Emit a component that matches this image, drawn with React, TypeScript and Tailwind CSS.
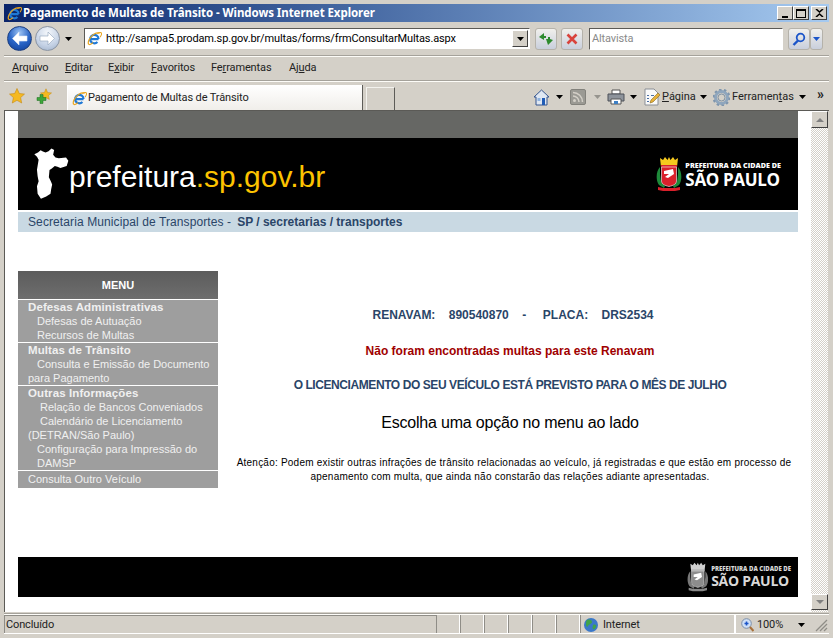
import type { ReactNode } from "react";

const IeLogo = ({ size = 16 }: { size?: number }) => (
  <svg width={size} height={size} viewBox="0 0 16 16" className="shrink-0">
    <path d="M4 8.600h8.300M12.300 8.600a4.500 4.500 0 1 0-1.200 3.100" fill="none" stroke="#1f79d6" strokeWidth="2.300" />
    <path d="M13.500 2.200c-3.500-1.300-9 2-11.300 7.200-1 2.300-1.100 4.200-.2 4.800 1 .6 2.700-.2 4.400-1.800" fill="none" stroke="#e9a520" strokeWidth="1.300" />
    <path d="M11 2.600c2.400-1.100 4.100-1.200 4.500-.2.300.8-.3 2.400-1.500 4.100" fill="none" stroke="#e9a520" strokeWidth="1.100" />
  </svg>
);

const Caret = ({ color = "#000" }: { color?: string }) => (
  <svg width="7" height="4" viewBox="0 0 7 4" className="shrink-0">
    <path d="M0 0h7L3.500 4z" fill={color} />
  </svg>
);

const NavArrow = ({ dir, active }: { dir: "l" | "r"; active: boolean }) => (
  <div
    className={`w-[25px] h-[25px] rounded-full flex items-center justify-center border shrink-0 ${
      active
        ? "bg-[radial-gradient(circle_at_50%_25%,#9fc4f2,#2a66c8_50%,#0e3d96)] border-[#1d3f80]"
        : "bg-[radial-gradient(circle_at_50%_25%,#f4f7fb,#c6d3e6_60%,#9eb0c8)] border-[#8a94a3]"
    }`}
  >
    <svg width="17" height="15" viewBox="0 0 17 15">
      <path
        d={dir === "l" ? "M8 1L1.500 7.500 8 14v-4h8V5H8z" : "M9 1l6.500 6.500L9 14v-4H1V5h8z"}
        fill="#fff"
        stroke={active ? "#dbe7fa" : "#8ea1bb"}
        strokeWidth="0.6"
      />
    </svg>
  </div>
);

const SquareBtn = ({ children, w = 22 }: { children: ReactNode; w?: number }) => (
  <div
    style={{ width: w }}
    className="h-[22px] rounded-[3px] border border-[#b5b2aa] bg-gradient-to-b from-[#f1f0ec] to-[#c9cfdc] flex items-center justify-center shrink-0"
  >
    {children}
  </div>
);

const WinBtn = ({ children }: { children: ReactNode }) => (
  <div className="w-[16px] h-[14px] bg-[#d4d0c8] border border-t-white border-l-white border-r-[#404040] border-b-[#404040] flex items-center justify-center shrink-0">
    {children}
  </div>
);

const Groove = () => <div className="h-[2px] shrink-0 bg-[#fdfcf8] border-t border-[#a5a29b]" />;

const MenuLabel = ({ pre, u, post }: { pre?: string; u: string; post: string }) => (
  <span>
    {pre}
    <span className="underline">{u}</span>
    {post}
  </span>
);

const SpMap = () => (
  <svg width="35" height="52" viewBox="15 12 106 156" className="shrink-0">
    <path
      d="M16 30L27 25L35 18L42 22L50 25L59 21L68 13L76 17L73 32L80 40L90 42L112 40L119 50L114 66L95 72L86 68L78 66L69 73L62 78L60 100L66 112L70 122L67 136L65 150L52 158L36 165L26 150L24 127L29 112L26 97L24 77L29 47L24 38Z"
      fill="#fff"
    />
  </svg>
);

const Crest = ({ mono, h }: { mono?: boolean; h: number }) => (
  <svg width={(h * 26) / 36} height={h} viewBox="0 0 26 36" className="shrink-0">
    <path d="M4 2l3 2 2-3 2.500 3L13 1l1.500 3L17 1l2 3 3-2-1 9H5z" fill={mono ? "#cfcfcf" : "#f6c91e"} />
    <path d="M5 9h16v2H5z" fill={mono ? "#aaa" : "#d9202b"} />
    <path d="M4 11C0 15-.5 24 3 29l5 3 1-2-4-4-1-8zM22 11c4 4 4.500 13 1 18l-5 3-1-2 4-4 1-8z" fill={mono ? "#777" : "#1e8a3a"} />
    <path d="M5.500 11h15v14c0 3-3 4.500-7.500 5.500-4.500-1-7.500-2.500-7.500-5.500z" fill={mono ? "#8c8c8c" : "#d9202b"} stroke="#fff" strokeWidth="0.6" />
    <path d="M8 15l9-2 1 5-6 4-3-1 4-3-5 0z" fill="#fff" />
    <path d="M2 31l5 1h12l5-1v3l-5 1H7l-5-1z" fill={mono ? "#888" : "#d9202b"} />
  </svg>
);

const CityLogo = ({ mono, small }: { mono?: boolean; small?: boolean }) => (
  <div className={`flex items-center gap-[3px] font-['Open_Sans',sans-serif] ${mono ? "text-[#d8d8d8]" : "text-white"}`}>
    <Crest mono={mono} h={small ? 30 : 36} />
    <div className="flex flex-col items-start">
      <span className={`font-extrabold whitespace-nowrap ${small ? "text-[6px] leading-[7px]" : "text-[7.200px] leading-[8px]"}`}>
        PREFEITURA DA CIDADE DE
      </span>
      <span className={`font-bold tracking-[-0.02em] whitespace-nowrap ${small ? "mt-[1px] text-[14px] leading-[14px]" : "mt-[2px] text-[17px] leading-[17px]"}`}>
        SÃO PAULO
      </span>
    </div>
  </div>
);

const SideItem = ({ children, indent = "" }: { children: ReactNode; indent?: string }) => (
  <div className={`leading-[14px] whitespace-nowrap ${indent}`}>{children}</div>
);

const SideHead = ({ children }: { children: ReactNode }) => (
  <div className="leading-[14px] text-[11.500px] font-bold tracking-[0.1px] whitespace-nowrap">{children}</div>
);

const StatusCell = () => <div className="w-[24px] h-full border-l border-[#8f8d87] border-r border-r-white shrink-0" />;

export default function App() {
  return (
    <div className="w-[833px] h-[638px] overflow-hidden bg-[#d4d0c8] flex flex-col pt-[4px] px-[4px] font-['Roboto',sans-serif] text-[11px] tracking-[-0.13px] text-black">
      {/* title bar */}
      <div className="h-[18px] shrink-0 bg-gradient-to-r from-[#0a246a] to-[#a6caf0] flex items-center pl-[3px] pr-[2px]">
        <IeLogo size={15} />
        <span className="ml-[1px] text-white font-['Noto_Sans',sans-serif] font-bold text-[11.500px] tracking-[-0.07px] whitespace-nowrap">
          Pagamento de Multas de Trânsito - Windows Internet Explorer
        </span>
        <div className="ml-auto flex">
          <WinBtn>
            <div className="w-[6px] h-[2px] bg-black mt-[7px]" />
          </WinBtn>
          <WinBtn>
            <div className="w-[10px] h-[9px] border border-black border-t-2" />
          </WinBtn>
          <div className="ml-[2px]">
            <WinBtn>
              <svg width="9" height="8" viewBox="0 0 9 8">
                <path d="M1 0l3.500 3L8 0M1 8l3.500-3L8 8" stroke="#000" strokeWidth="1.600" fill="none" />
              </svg>
            </WinBtn>
          </div>
        </div>
      </div>

      {/* nav bar */}
      <div className="h-[33px] shrink-0 flex items-center pl-[3px]">
        <NavArrow dir="l" active />
        <div className="ml-[3px]">
          <NavArrow dir="r" active={false} />
        </div>
        <div className="ml-[5px]">
          <Caret />
        </div>
        <div className="ml-[12px] w-[446px] h-[21px] bg-white border border-[#5b5a56] border-r-white border-b-white flex items-center shrink-0">
          <div className="ml-[2px]">
            <IeLogo size={15} />
          </div>
          <span className="ml-[4px] mt-[1px] whitespace-nowrap">
            http://sampa5.prodam.sp.gov.br/multas/forms/frmConsultarMultas.aspx
          </span>
          <div className="ml-auto mr-[1px] w-[16px] h-[17px] bg-[#d4d0c8] border border-[#404040] border-t-white border-l-white flex items-center justify-center">
            <Caret />
          </div>
        </div>
        <div className="ml-[5px]">
          <SquareBtn>
            <svg width="16" height="14" viewBox="0 0 16 14">
              <path d="M6 1L1 5l5 3V6h2V4H6z" fill="#2e8b2e" />
              <path d="M10 13l5-5-3-1V5h-2v2H8z" fill="#2e8b2e" />
            </svg>
          </SquareBtn>
        </div>
        <div className="ml-[4px]">
          <SquareBtn>
            <svg width="12" height="12" viewBox="0 0 12 12">
              <path d="M1.500 1.500l9 9M10.500 1.500l-9 9" stroke="#d9433c" strokeWidth="2.600" />
            </svg>
          </SquareBtn>
        </div>
        <div className="ml-[6px] w-[194px] h-[22px] bg-white border border-[#5b5a56] border-r-white border-b-white flex items-center pl-[2px] pt-[2px] text-[#8a8a8a] shrink-0">
          Altavista
        </div>
        <div className="ml-[5px] flex">
          <SquareBtn>
            <svg width="14" height="14" viewBox="0 0 14 14">
              <circle cx="8.500" cy="5.500" r="3.800" fill="none" stroke="#1b55c9" strokeWidth="1.800" />
              <path d="M6 8.500L1.500 13" stroke="#1b55c9" strokeWidth="2.400" />
            </svg>
          </SquareBtn>
          <SquareBtn w={13}>
            <Caret color="#1b55c9" />
          </SquareBtn>
        </div>
      </div>
      <Groove />

      {/* menu bar */}
      <div className="h-[23px] shrink-0 flex items-center pl-[8px] text-[#222]">
        <div className="w-[53px]"><MenuLabel u="A" post="rquivo" /></div>
        <div className="w-[43px]"><MenuLabel u="E" post="ditar" /></div>
        <div className="w-[43px]"><MenuLabel pre="E" u="x" post="ibir" /></div>
        <div className="w-[60px]"><MenuLabel u="F" post="avoritos" /></div>
        <div className="w-[78px]"><MenuLabel pre="Fe" u="r" post="ramentas" /></div>
        <div><MenuLabel pre="Aj" u="u" post="da" /></div>
      </div>
      <Groove />

      {/* tab row */}
      <div className="h-[28px] shrink-0 flex items-end pl-[5px] text-[#222]">
        <div className="h-full flex items-center">
          <svg width="16" height="16" viewBox="0 0 16 16">
            <path d="M8 .5l2.300 5 5.200.6-3.900 3.500 1.100 5.400L8 12.300l-4.700 2.700 1.100-5.400L.5 6.100l5.200-.6z" fill="#f5b921" stroke="#c48a12" strokeWidth="0.600" />
          </svg>
          <svg width="16" height="16" viewBox="0 0 16 16" className="ml-[11px]">
            <path d="M10 .8l1.600 3.700 3.900.4-3 2.600.8 3.900L10 9.500l-3.300 1.900.8-3.900-3-2.600 3.900-.4z" fill="#f5b921" stroke="#c48a12" strokeWidth="0.500" />
            <path d="M4 6.500h3v3h3v3H7v3H4v-3H1v-3h3z" fill="#3da63a" stroke="#1d6d1d" strokeWidth="0.500" />
          </svg>
        </div>
        <div className="ml-[15px] w-[296px] h-[25px] bg-gradient-to-b from-white to-[#f0eeea] border-r border-[#5d5c58] border-l border-l-white flex items-center pl-[4px] pt-[1px] shrink-0">
          <IeLogo size={15} />
          <span className="ml-[1px] whitespace-nowrap">Pagamento de Multas de Trânsito</span>
        </div>
        <div className="ml-[3px] w-[29px] h-[23px] border border-b-0 border-[#f3f2ee] border-r-[#5d5c58] shrink-0" />
        <div className="h-full flex items-center ml-[138px] pt-[2px]">
          <svg width="17" height="17" viewBox="0 0 17 17" className="shrink-0">
            <path d="M8.500 1L1 8h2v8h11V8h2z" fill="#dfe7f2" stroke="#34558f" />
            <path d="M9 9h3v7H9z" fill="#1f5bb5" />
            <path d="M4.500 9h3v3h-3z" fill="#8fb3e0" />
          </svg>
          <div className="ml-[6px]"><Caret /></div>
          <div className="ml-[7px] w-[16px] h-[16px] rounded-[2px] bg-[#9b9a94] border border-[#83827c] flex items-center justify-center">
            <svg width="12" height="12" viewBox="0 0 12 12">
              <circle cx="2.500" cy="9.500" r="1.500" fill="#d4d0c8" />
              <path d="M1 5a6 6 0 0 1 6 6M1 1.500a9.500 9.500 0 0 1 9.500 9.500" fill="none" stroke="#d4d0c8" strokeWidth="1.500" />
            </svg>
          </div>
          <div className="ml-[8px]"><Caret color="#96948e" /></div>
          <svg width="18" height="16" viewBox="0 0 18 16" className="ml-[6px] shrink-0">
            <path d="M5 1h8v4H5z" fill="#fff" stroke="#555" />
            <path d="M1 5h16v7H1z" fill="#8d939b" stroke="#4c5159" />
            <path d="M4 10h10v5H4z" fill="#fff" stroke="#555" />
            <path d="M7 12h4v3H7z" fill="#3d7fc4" />
          </svg>
          <div className="ml-[5px]"><Caret /></div>
          <svg width="18" height="18" viewBox="0 0 18 18" className="ml-[6px] shrink-0">
            <path d="M2 1h9l4 4v12H2z" fill="#fafafa" stroke="#8a8f96" />
            <path d="M4 7h2v1H4zM4 10h2v1H4zM4 13h2v1H4zM8 7h3v1H8z" fill="#4a6fa5" />
            <path d="M7 15l1-3 7-7 2 2-7 7z" fill="#e7b23a" stroke="#8a6a1d" strokeWidth="0.600" />
          </svg>
          <span className="ml-[1px] w-[32px] shrink-0 tracking-normal"><span className="underline">P</span>ágina</span>
          <div className="ml-[6px]"><Caret /></div>
          <svg width="17" height="17" viewBox="0 0 17 17" className="ml-[6px] shrink-0">
            <circle cx="8.500" cy="8.500" r="6" fill="none" stroke="#8fa6bd" strokeWidth="3" />
            <circle cx="8.500" cy="8.500" r="8" fill="none" stroke="#7e95ad" strokeWidth="2" strokeDasharray="2.500 2.500" />
            <circle cx="8.500" cy="8.500" r="3.500" fill="#d4d0c8" stroke="#5d7793" strokeWidth="0.700" />
          </svg>
          <span className="ml-[2px] w-[61px] shrink-0 whitespace-nowrap tracking-normal">Ferramen<span className="underline">t</span>as</span>
          <div className="ml-[6px]"><Caret /></div>
          <span className="ml-[11px] mb-[6px] text-[14px] font-bold leading-none">»</span>
        </div>
      </div>

      {/* browser frame */}
      <div className="h-[502px] shrink-0 flex border-t border-l border-[#5b5a56] overflow-hidden tracking-normal">
        <div className="w-[806px] bg-white px-[13px] shrink-0">
          <div className="h-[27px] bg-[#666764]" />
          <div className="h-[72px] bg-black flex items-center justify-between pl-[16px] pr-[17px]">
            <div className="flex items-start">
              <SpMap />
              <div className="mt-[11px] font-['Liberation_Sans',sans-serif] text-[30px] leading-[36px] text-white whitespace-nowrap">
                prefeitura<span className="text-[#fdc300]">.sp.gov.br</span>
              </div>
            </div>
            <CityLogo />
          </div>
          <div className="mt-[2px] h-[20px] bg-[#c9d9e3] flex items-center pl-[10px] font-['Liberation_Sans',sans-serif] text-[12px] tracking-[0.1px] text-[#2a4568] whitespace-nowrap">
            Secretaria Municipal de Transportes -
            <b className="ml-[6px] tracking-normal">SP / secretarias / transportes</b>
          </div>

          <div className="mt-[39px] flex font-['Liberation_Sans',sans-serif]">
            <div className="w-[200px] shrink-0 text-[11px] text-[#f0f0f0]">
              <div className="h-[28px] bg-gradient-to-b from-[#5c5c5c] to-[#6e6e6e] flex items-center justify-center font-bold text-white">
                MENU
              </div>
              <div className="mt-[1px] bg-[#9e9e9e] h-[42px] pl-[10px]">
                <SideHead>Defesas Administrativas</SideHead>
                <SideItem indent="pl-[9px]">Defesas de Autuação</SideItem>
                <SideItem indent="pl-[9px]">Recursos de Multas</SideItem>
              </div>
              <div className="mt-[1px] bg-[#9e9e9e] h-[42px] pl-[10px]">
                <SideHead>Multas de Trânsito</SideHead>
                <SideItem indent="pl-[9px]">Consulta e Emissão de Documento</SideItem>
                <SideItem>para Pagamento</SideItem>
              </div>
              <div className="mt-[1px] bg-[#9e9e9e] h-[84px] pl-[10px]">
                <SideHead>Outras Informações</SideHead>
                <SideItem indent="pl-[12px]">Relação de Bancos Conveniados</SideItem>
                <SideItem indent="pl-[12px]">Calendário de Licenciamento</SideItem>
                <SideItem>(DETRAN/São Paulo)</SideItem>
                <SideItem indent="pl-[9px]">Configuração para Impressão do</SideItem>
                <SideItem indent="pl-[9px]">DAMSP</SideItem>
              </div>
              <div className="mt-[1px] bg-[#9e9e9e] h-[17px] pl-[10px] flex items-center">Consulta Outro Veículo</div>
            </div>

            <div className="flex-1 pl-[4px] pt-[37px] text-center">
              <div className="pl-[6px] text-[12px] leading-[14px] font-bold text-[#2a4568] whitespace-pre">
                RENAVAM:{"    "}890540870{"    "}-{"     "}PLACA:{"    "}DRS2534
              </div>
              <div className="mt-[22px] text-[12px] leading-[14px] font-bold text-[#a00000]">
                Não foram encontradas multas para este Renavam
              </div>
              <div className="mt-[20px] text-[12px] leading-[14px] font-bold tracking-[-0.42px] text-[#2a4568] whitespace-nowrap">
                O LICENCIAMENTO DO SEU VEÍCULO ESTÁ PREVISTO PARA O MÊS DE JULHO
              </div>
              <div className="mt-[22px] text-[16px] leading-[18px] tracking-[-0.2px]">Escolha uma opção no menu ao lado</div>
              <div className="mt-[24px] text-[10px] leading-[14px] tracking-[0.22px] whitespace-nowrap">
                <div className="pl-[8px]">Atenção: Podem existir outras infrações de trânsito relacionadas ao veículo, já registradas e que estão em processo de</div>
                <div>apenamento com multa, que ainda não constarão das relações adiante apresentadas.</div>
              </div>
            </div>
          </div>

          <div className="mt-[69px] h-[40px] bg-black flex items-center justify-end pr-[7px]">
            <CityLogo mono small />
          </div>
        </div>

        {/* scrollbar */}
        <div className="w-[18px] shrink-0 flex flex-col justify-between bg-[conic-gradient(#d4d0c8_25%,#fff_0_50%,#d4d0c8_0_75%,#fff_0)] bg-[length:2px_2px] border-r border-[#d4d0c8]">
          <div className="h-[17px] bg-[#d4d0c8] border border-t-white border-l-white border-r-[#404040] border-b-[#404040] flex items-center justify-center">
            <div className="w-0 h-0 border-l-[4px] border-r-[4px] border-b-[4px] border-transparent border-b-[#808080]" />
          </div>
          <div className="h-[16px] mb-[2px] bg-[#d4d0c8] border border-t-white border-l-white border-r-[#404040] border-b-[#404040] flex items-center justify-center">
            <div className="w-0 h-0 border-l-[4px] border-r-[4px] border-t-[4px] border-transparent border-t-[#808080]" />
          </div>
        </div>
      </div>

      {/* status bar */}
      <div className="mt-[1px] h-[2px] shrink-0 bg-[#fdfcf8] border-t border-[#a5a29b]" />
      <div className="h-[19px] shrink-0 flex items-stretch text-[#222] border-b border-white">
        <div className="w-[432px] border-t border-l border-[#8f8d87] pl-[1px] pt-[1px] flex items-center shrink-0">Concluído</div>
        <StatusCell />
        <StatusCell />
        <StatusCell />
        <StatusCell />
        <StatusCell />
        <StatusCell />
        <div className="w-[156px] border-l border-[#8f8d87] border-r-2 border-r-white flex items-center shrink-0 pl-[2px] pt-[2px]">
          <svg width="16" height="16" viewBox="0 0 16 16" className="shrink-0">
            <circle cx="8" cy="8" r="7" fill="#3a78c9" />
            <path d="M4 3c3-1 5 0 5 2s-3 2-4 4-2 0-2-2 0-3 1-4zM10 8c2-1 4 0 3 2s-2 3-3 2 0-3 0-4z" fill="#3fa34a" />
          </svg>
          <span className="ml-[4px]">Internet</span>
        </div>
        <div className="flex-1 flex items-center pl-[5px] pt-[2px]">
          <svg width="13" height="14" viewBox="0 0 13 14" className="shrink-0">
            <circle cx="5.500" cy="5.500" r="4.800" fill="#cfe0f7" stroke="#7c8fa8" />
            <path d="M3.500 5.500h4M5.500 3.500v4" stroke="#1b55c9" strokeWidth="1.600" />
            <path d="M9 9l3.500 4" stroke="#a8703a" strokeWidth="2" />
          </svg>
          <span className="ml-[3px] w-[28px] shrink-0">100%</span>
          <div className="ml-[13px]"><Caret /></div>
          <svg width="13" height="13" viewBox="0 0 13 13" className="ml-[10px] shrink-0">
            <path d="M12 1L1 12M12 5l-7 7M12 9l-3 3" stroke="#8f8d87" strokeWidth="1.300" />
          </svg>
        </div>
      </div>
    </div>
  );
}
